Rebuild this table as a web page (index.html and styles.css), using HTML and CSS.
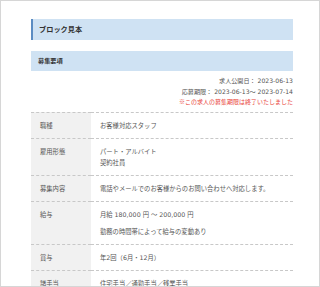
FILE: index.html
```html
<!DOCTYPE html>
<html lang="ja">
<head>
<meta charset="utf-8">
<link rel="stylesheet" href="styles.css">
</head>
<body>
<div class="frame">
  <h2 class="title">ブロック見本</h2>
  <h3 class="subtitle">募集要項</h3>
  <div class="meta">
    <p>求人公開日： 2023-06-13</p>
    <p>応募期限： 2023-06-13～ 2023-07-14</p>
    <p class="closed">※この求人の募集期限は終了いたしました</p>
  </div>
  <table class="spec">
    <tr><th>職種</th><td><p>お客様対応スタッフ</p></td></tr>
    <tr><th>雇用形態</th><td><p>パート・アルバイト<br>契約社員</p></td></tr>
    <tr><th>募集内容</th><td><p>電話やメールでのお客様からのお問い合わせへ対応します。</p></td></tr>
    <tr><th>給与</th><td><p>月給 180,000 円 ～ 200,000 円</p><p class="gap">勤務の時間帯によって給与の変動あり</p></td></tr>
    <tr><th>賞与</th><td><p>年2回（6月・12月）</p></td></tr>
    <tr><th>諸手当</th><td><p>住宅手当／通勤手当／残業手当</p></td></tr>
  </table>
</div>
</body>
</html>
```
FILE: styles.css
```css
* { box-sizing: border-box; }
html, body { margin: 0; padding: 0; background: #fff; }
body {
  font-family: "DejaVu Sans", "Noto Sans CJK JP", sans-serif;
  color: #555;
}
.frame {
  width: 320px;
  height: 287px;
  border: 1px solid #d6d6d6;
  padding: 18px 26px 0 30px;
  overflow: hidden;
}
.title {
  margin: 0;
  height: 21px;
  background: #cfe2f3;
  border-left: 2px solid #5b8cc2;
  padding-left: 6px;
  font-size: 7.2px;
  line-height: 21px;
  font-weight: bold;
  color: #333;
}
.subtitle {
  margin: 11px 0 0;
  height: 20px;
  background: #cfe2f3;
  padding-left: 7px;
  font-size: 6.2px;
  line-height: 20px;
  font-weight: bold;
  color: #333;
}
.meta {
  margin-top: 5px;
  text-align: right;
  font-size: 6.1px;
  line-height: 10.5px;
  color: #555;
}
.meta p { margin: 0; }
.meta .closed {
  color: #e9443a;
  font-family: "Noto Sans CJK JP", sans-serif;
  font-size: 6px;
}
.spec {
  width: 100%;
  margin-top: 4px;
  border-collapse: collapse;
  font-size: 6.3px;
  line-height: 11px;
}
.spec tr { border-top: 1px dashed #c8c8c8; border-bottom: 1px dashed #c8c8c8; }
.spec th {
  width: 60px;
  background: #f1f1f1;
  text-align: left;
  font-weight: normal;
  vertical-align: top;
  padding: 7px 9px;
  color: #555;
}
.spec td {
  vertical-align: top;
  padding: 7px 9px;
  color: #555;
}
.spec p { margin: 0; }
.spec p.gap { margin-top: 6px; }
```
